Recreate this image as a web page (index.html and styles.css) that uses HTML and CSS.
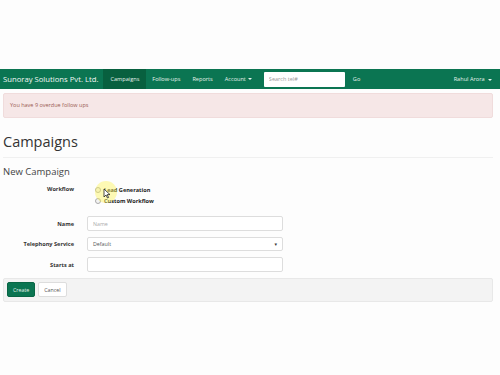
FILE: index.html
```html
<!DOCTYPE html>
<html lang="en">
<head>
    <meta charset="UTF-8">
    <title>Campaigns</title>
    <link rel="stylesheet" href="styles.css">
</head>
<body>
    <nav class="navbar">
        <div class="brand">Sunoray Solutions Pvt. Ltd.</div>
        <ul class="nav-links">
            <li class="active">Campaigns</li>
            <li>Follow-ups</li>
            <li>Reports</li>
            <li>Account <span class="caret"></span></li>
        </ul>
        <form class="nav-search">
            <input type="text" placeholder="Search tel#">
            <span class="go">Go</span>
        </form>
        <div class="nav-user">Rahul Arora <span class="caret"></span></div>
    </nav>

    <div class="page">
        <div class="alert">You have 9 overdue follow ups</div>

        <h1>Campaigns</h1>
        <h2>New Campaign</h2>

        <form class="campaign-form">
            <div class="row">
                <label class="label">Workflow</label>
                <div class="radios">
                    <div class="radio"><span class="dot"></span>Lead Generation</div>
                    <div class="radio"><span class="dot"></span>Custom Workflow</div>
                    <span class="cursor-glow"></span>
                    <svg class="pointer" width="8" height="11" viewBox="0 0 8 11"><path d="M1 1 L1 9 L3 7 L4.5 10 L5.6 9.5 L4.2 6.6 L7 6.6 Z" fill="#fff" stroke="#222" stroke-width="0.8"/></svg>
                </div>
            </div>
            <div class="row">
                <label class="label">Name</label>
                <input class="field" type="text" placeholder="Name">
            </div>
            <div class="row">
                <label class="label">Telephony Service</label>
                <div class="field select">Default <span class="arrow">&#9662;</span></div>
            </div>
            <div class="row">
                <label class="label">Starts at</label>
                <input class="field" type="text">
            </div>
            <div class="actions">
                <button type="button" class="btn btn-create">Create</button>
                <button type="button" class="btn btn-cancel">Cancel</button>
            </div>
        </form>
    </div>
</body>
</html>
```

FILE: styles.css
```css
body {
    margin: 0;
    padding-top: 69px;
    background-color: #fdfdfd;
    font-family: "Open Sans", "DejaVu Sans", sans-serif;
    color: #333;
}
.navbar {
    display: flex;
    align-items: center;
    height: 20px;
    background-color: #0b7552;
    color: #e6f2ec;
    font-size: 5.6px;
}
.brand {
    padding: 0 5px 0 3px;
    font-size: 7.7px;
    color: #f2f7f4;
}
.nav-links {
    display: flex;
    list-style: none;
    margin: 0;
    padding: 0;
    height: 100%;
}
.nav-links li {
    display: flex;
    align-items: center;
    padding: 0 6px;
}
.nav-links li.active {
    background-color: #08603f;
    padding: 0 7px;
}
.caret {
    display: inline-block;
    width: 0;
    height: 0;
    margin-left: 2px;
    border-left: 2px solid transparent;
    border-right: 2px solid transparent;
    border-top: 2px solid #e6f2ec;
    vertical-align: middle;
}
.nav-search {
    display: flex;
    align-items: center;
    margin-left: 6px;
}
.nav-search input {
    width: 81px;
    height: 15px;
    box-sizing: border-box;
    border: none;
    border-radius: 1px;
    padding: 0 5px;
    font-family: inherit;
    font-size: 5.5px;
}
.nav-search input::placeholder {
    color: #999;
}
.go {
    margin-left: 8px;
}
.nav-user {
    margin-left: auto;
    margin-right: 8px;
}
.page {
    padding: 4px 7px 0 3px;
}
.alert {
    background-color: #f6e7e7;
    border: 1px solid #f0dcdc;
    color: #9a5a52;
    font-size: 5.5px;
    padding: 7px 6px 8px;
    border-radius: 2px;
}
h1 {
    margin: 14px 0 0;
    font-size: 14.5px;
    font-weight: normal;
    line-height: 20px;
    color: #333;
    padding-bottom: 5px;
    border-bottom: 1px solid #f0f0f0;
}
h2 {
    margin: 7px 0 6px;
    font-size: 9.5px;
    font-weight: normal;
    color: #444;
}
.row {
    display: flex;
    align-items: center;
    margin-bottom: 6px;
}
.label {
    width: 71px;
    text-align: right;
    font-size: 5.6px;
    font-weight: bold;
    color: #333;
    margin-right: 13px;
}
.row:first-child .label {
    align-self: flex-start;
    margin-top: 1px;
}
.radios {
    position: relative;
    padding-left: 8px;
    margin-bottom: 4px;
}
.radio {
    display: flex;
    align-items: center;
    font-size: 5.6px;
    font-weight: bold;
    color: #222;
    height: 11px;
}
.dot {
    width: 4px;
    height: 4px;
    border: 1px solid #aaa;
    border-radius: 50%;
    margin-right: 3px;
    background-color: #f4f4f4;
}
.cursor-glow {
    position: absolute;
    left: 8px;
    top: -3px;
    width: 22px;
    height: 22px;
    border-radius: 50%;
    background-color: rgba(252, 243, 90, 0.45);
}
.pointer {
    position: absolute;
    left: 16px;
    top: 4px;
}
.field {
    width: 196px;
    height: 15px;
    box-sizing: border-box;
    border: 1px solid #ddd;
    border-radius: 2px;
    background-color: #fff;
    font-family: inherit;
    font-size: 5.3px;
    padding: 0 5px;
    margin: 0;
}
.field::placeholder {
    color: #aaa;
}
.select {
    display: flex;
    align-items: center;
    justify-content: space-between;
    color: #555;
    height: 14px;
}
.arrow {
    font-size: 5px;
    color: #333;
}
.actions {
    display: flex;
    gap: 3px;
    background-color: #f3f3f3;
    border: 1px solid #e8e8e8;
    border-radius: 2px;
    padding: 3px 3px 4px;
    margin-top: 4px;
}
.btn {
    height: 15px;
    font-family: inherit;
    font-size: 5.3px;
    border-radius: 2px;
    padding: 0 5px;
}
.btn-create {
    background-color: #0b7552;
    border: 1px solid #096645;
    color: #e6f2ec;
}
.btn-cancel {
    background-color: #fff;
    border: 1px solid #ddd;
    color: #555;
}
```
